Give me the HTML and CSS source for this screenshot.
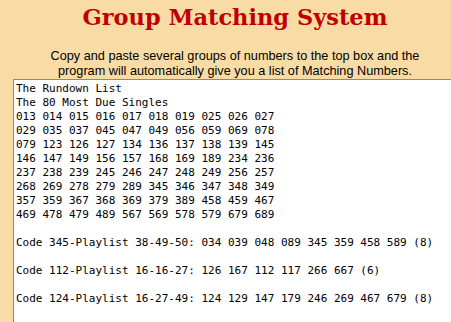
FILE: index.html
```html
<!DOCTYPE html>
<html>
<head>
<meta charset="utf-8">
<link rel="stylesheet" href="styles.css">
</head>
<body>
<div class="page">
  <h1 class="title">Group Matching System</h1>
  <p class="intro">Copy and paste several groups of numbers to the top box and the<br>program will automatically give you a list of Matching Numbers.</p>
  <div class="box"><div class="output">The Rundown List
The 80 Most Due Singles
013 014 015 016 017 018 019 025 026 027
029 035 037 045 047 049 056 059 069 078
079 123 126 127 134 136 137 138 139 145
146 147 149 156 157 168 169 189 234 236
237 238 239 245 246 247 248 249 256 257
268 269 278 279 289 345 346 347 348 349
357 359 367 368 369 379 389 458 459 467
469 478 479 489 567 569 578 579 679 689

Code 345-Playlist 38-49-50: 034 039 048 089 345 359 458 589 (8)

Code 112-Playlist 16-16-27: 126 167 112 117 266 667 (6)

Code 124-Playlist 16-27-49: 124 129 147 179 246 269 467 679 (8)
</div></div>
</div>
</body>
</html>
```
FILE: styles.css
```css
html, body {
  margin: 0;
  padding: 0;
  background: #f9dca5;
  overflow: hidden;
}
.page {
  width: 451px;
  height: 322px;
  overflow: hidden;
  display: flex;
  flex-direction: column;
}
.title {
  margin: 2px 0 0 19px;
  font-family: "DejaVu Serif", serif;
  font-weight: bold;
  font-size: 22.5px;
  line-height: 30px;
  color: #c00000;
  text-align: center;
}
.intro {
  margin: 17px 0 0 19px;
  font-family: "Liberation Sans", Arial, sans-serif;
  font-size: 12.7px;
  line-height: 15px;
  color: #000;
  text-align: center;
}
.box {
  margin: 0 0 0 13px;
  flex: 1;
  background: #fff;
  border-top: 1px solid #8a8a8a;
  border-left: 1px solid #8a8a8a;
  padding: 2px 0 0 2px;
}
.output {
  margin: 0;
  font-family: "DejaVu Sans Mono", monospace;
  font-size: 11px;
  line-height: 14px;
  color: #000;
  white-space: pre;
}
```
